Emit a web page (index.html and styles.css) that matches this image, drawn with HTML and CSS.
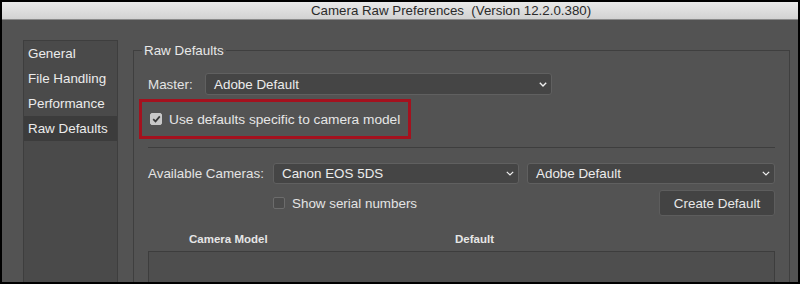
FILE: index.html
```html
<!DOCTYPE html>
<html>
<head>
<meta charset="utf-8">
<link rel="stylesheet" href="styles.css">
</head>
<body>
<div class="window">
  <div class="titlebar"><span class="title">Camera Raw Preferences  (Version 12.2.0.380)</span></div>
  <div class="main">
    <nav class="sidebar">
      <div class="nav-item">General</div>
      <div class="nav-item">File Handling</div>
      <div class="nav-item">Performance</div>
      <div class="nav-item selected">Raw Defaults</div>
    </nav>
    <fieldset class="group">
      <legend class="group-title">Raw Defaults</legend>
      <div class="group-body">
        <div class="row master-row">
          <span class="label label-master">Master:</span>
          <div class="select select-master"><span>Adobe Default</span><svg class="chev" width="8" height="5" viewBox="0 0 8 5"><polyline points="0.8,0.8 4,4 7.2,0.8" fill="none" stroke="#f0f0f0" stroke-width="1.4"/></svg></div>
        </div>
        <div class="highlight">
          <span class="checkbox checked"><svg width="9" height="8" viewBox="0 0 9 8"><polyline points="1.2,4.2 3.5,6.4 7.8,1.4" fill="none" stroke="#3a3a3a" stroke-width="1.7"/></svg></span>
          <span class="check-label">Use defaults specific to camera model</span>
        </div>
        <div class="separator"></div>
        <div class="row cam-row">
          <span class="label label-cam">Available Cameras:</span>
          <div class="select select-cam"><span>Canon EOS 5DS</span><svg class="chev" width="8" height="5" viewBox="0 0 8 5"><polyline points="0.8,0.8 4,4 7.2,0.8" fill="none" stroke="#f0f0f0" stroke-width="1.2"/></svg></div>
          <div class="select select-def"><span>Adobe Default</span><svg class="chev" width="8" height="5" viewBox="0 0 8 5"><polyline points="0.8,0.8 4,4 7.2,0.8" fill="none" stroke="#f0f0f0" stroke-width="1.2"/></svg></div>
        </div>
        <div class="row serial-row">
          <span class="checkbox"></span>
          <span class="serial-label">Show serial numbers</span>
          <button class="btn">Create Default</button>
        </div>
        <div class="table-head"><span class="col-model">Camera Model</span><span>Default</span></div>
        <div class="table"></div>
      </div>
    </fieldset>
  </div>
</div>
</body>
</html>
```
FILE: styles.css
```css
html, body {
  margin: 0;
  background: #000;
  height: 284px;
  overflow: hidden;
}
.window {
  box-sizing: border-box;
  width: 800px;
  height: 284px;
  border: 2px solid #000;
  background: #535353;
  overflow: hidden;
  font-family: "Liberation Sans", Arial, sans-serif;
  color: #e4e4e4;
  display: flex;
  flex-direction: column;
}
.titlebar {
  flex: none;
  height: 17px;
  border-bottom: 1px solid #8a8a8a;
  background: linear-gradient(#e9e9e9, #d2d2d2);
  padding-left: 309px;
  font-size: 13.3px;
  line-height: 17px;
  color: #2a2a2a;
  white-space: pre;
}
.main {
  flex: 1;
  min-height: 0;
  display: flex;
  align-items: flex-start;
}
.sidebar {
  flex: none;
  margin: 20px 0 0 21px;
  width: 93px;
  height: 300px;
  border: 1px solid #3e3e3e;
  background: #4a4a4a;
}
.nav-item {
  height: 25px;
  line-height: 25px;
  padding-left: 4px;
  font-size: 13.4px;
  color: #ececec;
}
.nav-item.selected {
  background: #3c3c3c;
}
.group {
  flex: 1;
  min-width: 0;
  margin: 22px 8px 0 15px;
  border: 1px solid #3f3f3f;
  padding: 14px 14px 0 8px;
  height: 300px;
}
.group-title {
  padding: 0 2px;
  font-size: 13.4px;
  line-height: 17px;
  color: #e8e8e8;
}
.group-body {
  padding-left: 6px;
  font-size: 13.4px;
}
.row {
  display: flex;
  align-items: center;
}
.master-row {
  height: 22px;
}
.label-master {
  width: 57px;
  flex: none;
}
.select {
  box-sizing: border-box;
  height: 22px;
  background: #454545;
  border: 1px solid #606060;
  border-radius: 3px;
  display: flex;
  align-items: center;
  justify-content: space-between;
  padding: 0 4px 0 8px;
  color: #ececec;
}
.select-master {
  width: 347px;
}
.chev {
  flex: none;
}
.highlight {
  margin: 4px 0 0 -9px;
  width: fit-content;
  height: 34px;
  border: 3px solid #a4111e;
  display: flex;
  align-items: center;
  padding: 0 8px;
}
.checkbox {
  box-sizing: border-box;
  flex: none;
  width: 12px;
  height: 12px;
  border-radius: 2px;
  border: 1px solid #6c6c6c;
  background: #4c4c4c;
  display: flex;
  align-items: center;
  justify-content: center;
}
.checkbox.checked {
  background: #c9c9c9;
  border-color: #c9c9c9;
}
.check-label {
  margin-left: 7px;
  font-size: 13.7px;
  color: #e6e6e6;
}
.separator {
  height: 1px;
  background: #3e3e3e;
  margin-top: 8px;
}
.cam-row {
  margin-top: 15px;
  height: 21px;
}
.cam-row .select {
  height: 21px;
}
.label-cam {
  width: 125px;
  flex: none;
}
.select-cam {
  width: 246px;
  flex: none;
}
.select-def {
  flex: 1;
  margin-left: 8px;
}
.serial-row {
  margin-top: 6px;
  height: 26px;
  padding-left: 125px;
}
.serial-label {
  margin-left: 7px;
}
.btn {
  margin-left: auto;
  width: 116px;
  height: 26px;
  box-sizing: border-box;
  background: #434343;
  border: 1px solid #5d5d5d;
  border-radius: 3px;
  color: #e8e8e8;
  font-family: "Liberation Sans", Arial, sans-serif;
  font-size: 13.4px;
  padding: 0;
}
.table-head {
  margin-top: 15px;
  display: grid;
  grid-template-columns: 307px 1fr;
  font-size: 11.5px;
  font-weight: bold;
  line-height: 16px;
  color: #e6e6e6;
}
.col-model {
  padding-left: 41px;
}
.table {
  margin-top: 4px;
  height: 100px;
  background: #4e4e4e;
  border: 1px solid #3d3d3d;
}
```
